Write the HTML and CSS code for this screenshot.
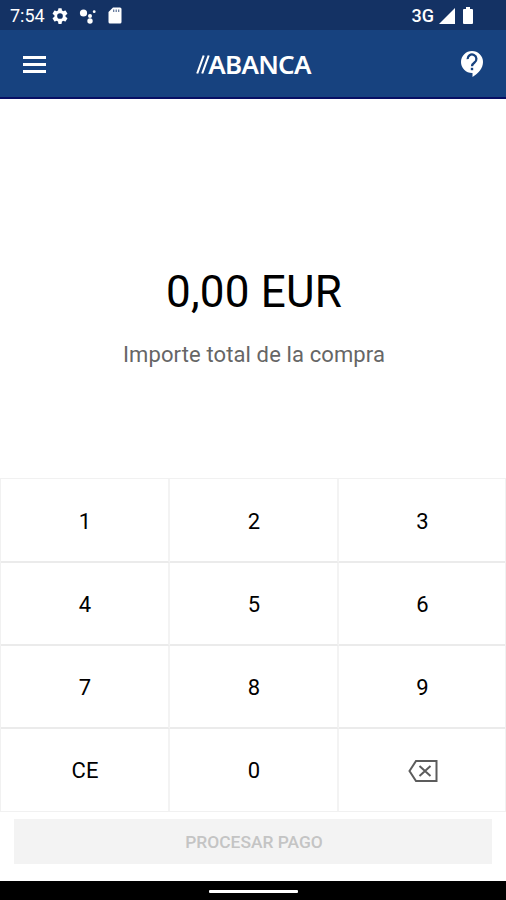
FILE: index.html
```html
<!DOCTYPE html>
<html lang="es">
<head>
    <meta charset="UTF-8">
    <meta name="viewport" content="width=device-width, initial-scale=1.0">
    <title>ABANCA - Pago</title>
    <link rel="stylesheet" href="styles.css">
</head>
<body>
    <div class="status-bar">
        <div class="status-left">
            <span class="clock">7:54</span>
            <svg class="icon-gear" width="18" height="18" viewBox="0 0 24 24"><path fill="#fff" d="M19.4 13a7.500 7.500 0 0 0 0-2l2.300-1.700a.6.6 0 0 0 .1-.7l-2.200-3.700a.6.6 0 0 0-.7-.2l-2.600 1a8 8 0 0 0-1.700-1L14.200 2a.6.6 0 0 0-.5-.5h-3.400a.6.6 0 0 0-.5.5l-.4 2.700a8 8 0 0 0-1.700 1l-2.600-1a.6.6 0 0 0-.7.2L2.200 8.600a.6.6 0 0 0 .1.700L4.600 11a7.500 7.500 0 0 0 0 2l-2.300 1.700a.6.6 0 0 0-.1.700l2.200 3.700c.1.200.4.300.7.200l2.600-1a8 8 0 0 0 1.700 1l.4 2.700c0 .3.200.5.500.5h3.400c.3 0 .5-.2.500-.5l.4-2.700a8 8 0 0 0 1.700-1l2.600 1c.3.100.6 0 .7-.2l2.200-3.700a.6.6 0 0 0-.1-.7zM12 15.800a3.800 3.800 0 1 1 0-7.600 3.800 3.800 0 0 1 0 7.600z"/></svg>
            <svg class="icon-assistant" width="18" height="16" viewBox="0 0 18 16"><g fill="#fff"><circle cx="4.500" cy="5" r="3.600"/><circle cx="11" cy="8" r="2"/><circle cx="11" cy="13" r="2.700"/><circle cx="15.200" cy="3.700" r="1.400"/></g></svg>
            <svg class="icon-sd" width="14" height="17" viewBox="0 0 14 17"><path fill="#fff" d="M5 .5h7a1.500 1.500 0 0 1 1.500 1.500v13a1.500 1.500 0 0 1-1.500 1.500H2A1.500 1.500 0 0 1 .5 15V5z"/><path stroke="#5b7196" stroke-width="1.200" d="M5.700 2.500v2.500M8.200 2.500v2.500M10.700 2.500v2.500"/></svg>
        </div>
        <div class="status-right">
            <span class="network">3G</span>
            <svg width="16" height="16" viewBox="0 0 16 16"><path fill="#fff" d="M0 16 16 0v16z"/></svg>
            <svg class="icon-battery" width="10" height="17" viewBox="0 0 10 17"><path fill="#fff" d="M3 0h4v2h2a1 1 0 0 1 1 1v13a1 1 0 0 1-1 1H1a1 1 0 0 1-1-1V3a1 1 0 0 1 1-1h2z"/></svg>
        </div>
    </div>

    <header class="header">
        <div class="menu-button"><span></span><span></span><span></span></div>
        <div class="logo"><svg width="14" height="19" viewBox="0 0 14 19"><path stroke="#fff" stroke-width="2.100" d="M1.200 18.500 7.700.5M6.200 18.500 12.700.5"/></svg><span>ABANCA</span></div>
        <svg class="help-button" width="22" height="26" viewBox="0 0 22 26"><path fill="#fff" d="M11 0a11 11 0 0 1 11 11c0 6-4.500 11.500-10.500 15v-4H11A11 11 0 0 1 11 0z"/><path fill="none" stroke="#17427f" stroke-width="2.300" d="M6.600 8.100a4.400 4.400 0 1 1 6.900 3.400C11.800 12.700 11 13.500 11 15.300"/><path fill="#17427f" d="M9.800 16.800h2.400v2.400H9.800z"/></svg>
    </header>

    <main class="amount-panel">
        <div class="amount">0,00 EUR</div>
        <div class="amount-label">Importe total de la compra</div>
    </main>

    <div class="keypad">
        <button class="key">1</button>
        <button class="key">2</button>
        <button class="key">3</button>
        <button class="key">4</button>
        <button class="key">5</button>
        <button class="key">6</button>
        <button class="key">7</button>
        <button class="key">8</button>
        <button class="key">9</button>
        <button class="key">CE</button>
        <button class="key">0</button>
        <button class="key" aria-label="Borrar">
            <svg width="30" height="22" viewBox="0 0 30 22"><path fill="none" stroke="#5c5c5c" stroke-width="2" d="M8 1h20.500v20H8L1.500 11zM11.500 6l11 10M22.500 6l-11 10"/></svg>
        </button>
    </div>

    <div class="pay-area">
        <button class="pay-button" disabled>PROCESAR PAGO</button>
    </div>

    <div class="nav-bar">
        <div class="nav-handle"></div>
    </div>
</body>
</html>
```
FILE: styles.css
```css
* {
    box-sizing: border-box;
}
body {
    margin: 0;
    height: 900px;
    display: flex;
    flex-direction: column;
    font-family: Roboto, sans-serif;
    background-color: #fff;
    overflow: hidden;
}
svg {
    display: block;
}
.status-bar {
    height: 30px;
    padding: 1px 33px 0 10px;
    display: flex;
    align-items: center;
    justify-content: space-between;
    background-color: #143264;
    color: #fff;
    font-size: 18px;
}
.status-left,
.status-right {
    display: flex;
    align-items: center;
}
.icon-gear {
    margin-left: 6px;
}
.icon-assistant {
    margin-left: 10px;
}
.icon-sd {
    margin-left: 11px;
}
.network {
    margin-right: 5px;
    font-weight: 500;
}
.icon-battery {
    margin-left: 8px;
}
.header {
    height: 69px;
    padding: 1px 23px 0;
    display: flex;
    align-items: center;
    justify-content: space-between;
    background-color: #17427f;
    border-bottom: 2px solid #080f64;
}
.menu-button {
    width: 23px;
    display: flex;
    flex-direction: column;
    gap: 4px;
}
.menu-button span {
    height: 3px;
    background-color: #fff;
}
.logo {
    display: flex;
    align-items: center;
    color: #fff;
    font-family: "Noto Sans", sans-serif;
    font-size: 26px;
    font-weight: 600;
    line-height: 28px;
    letter-spacing: -0.7px;
}
.logo span {
    margin-left: -2px;
}
.amount-panel {
    height: 379px;
    padding-top: 167px;
    text-align: center;
}
.amount {
    padding-left: 2px;
    font-size: 44px;
    line-height: 52px;
    letter-spacing: 0.2px;
    color: #000;
}
.amount-label {
    margin-top: 24px;
    padding-left: 2px;
    font-size: 22px;
    line-height: 26px;
    letter-spacing: 0.12px;
    color: #666;
}
.keypad {
    height: 334px;
    display: grid;
    grid-template-columns: 169px 169px 1fr;
    grid-template-rows: 84px 83px 83px 1fr;
    border: 1px solid #f1f1f1;
}
.key {
    display: flex;
    align-items: center;
    justify-content: center;
    padding: 2px 0 0 1px;
    border: 0 solid #f3f3f3;
    border-right-width: 2px;
    border-bottom: 2px solid #ebebeb;
    background-color: #fff;
    font-family: inherit;
    font-size: 22px;
    color: #000;
}
.key:nth-child(3n) {
    border-right: none;
}
.key:nth-child(n+10) {
    padding-top: 1px;
    border-bottom: none;
}
.pay-area {
    height: 69px;
    padding: 7px 14px 0;
}
.pay-button {
    width: 100%;
    height: 45px;
    padding: 0 0 0 2px;
    border: none;
    background-color: #f3f3f3;
    font-family: inherit;
    font-size: 17.4px;
    font-weight: 500;
    color: #c4c4c4;
}
.nav-bar {
    flex: 1;
    display: flex;
    align-items: center;
    justify-content: center;
    padding-top: 2px;
    background-color: #000;
}
.nav-handle {
    width: 89px;
    height: 3px;
    border-radius: 1px;
    background-color: #fff;
}
```
